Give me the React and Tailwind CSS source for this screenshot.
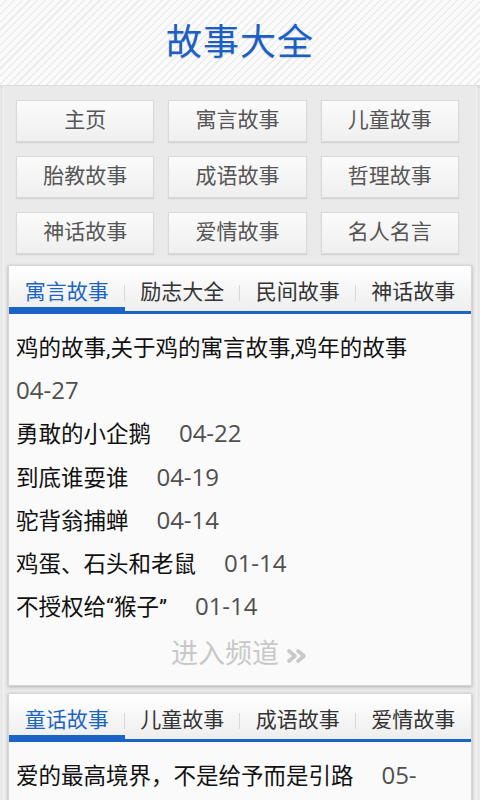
const navButtons = [
  '主页', '寓言故事', '儿童故事',
  '胎教故事', '成语故事', '哲理故事',
  '神话故事', '爱情故事', '名人名言',
];

const sections = [
  {
    tabs: ['寓言故事', '励志大全', '民间故事', '神话故事'],
    items: [
      { title: '鸡的故事,关于鸡的寓言故事,鸡年的故事', date: '04-27' },
      { title: '勇敢的小企鹅', date: '04-22' },
      { title: '到底谁耍谁', date: '04-19' },
      { title: '驼背翁捕蝉', date: '04-14' },
      { title: '鸡蛋、石头和老鼠', date: '01-14' },
      { title: '不授权给“猴子”', date: '01-14' },
    ],
  },
  {
    tabs: ['童话故事', '儿童故事', '成语故事', '爱情故事'],
    items: [{ title: '爱的最高境界，不是给予而是引路', date: '05-', tail: '12' }],
  },
];

const font = { fontFamily: "Roboto, 'Noto Sans CJK SC', sans-serif" };
const dateFont = { fontFamily: "'Open Sans', Roboto, sans-serif" };

const DoubleChevron = () => (
  <svg width="22" height="16" viewBox="0 0 22 16" className="ml-2 mt-1">
    <polyline points="2,3 8,8 2,13" fill="none" stroke="#c9c9c9" strokeWidth="3.6" strokeLinejoin="round" strokeLinecap="round" />
    <polyline points="11,3 17,8 11,13" fill="none" stroke="#c9c9c9" strokeWidth="3.6" strokeLinejoin="round" strokeLinecap="round" />
  </svg>
);

const Section = ({ tabs, items, more }) => (
  <div className="mx-2 bg-[#fafafa] border border-[#d6d6d6] shadow-[0_1px_3px_rgba(0,0,0,0.25)]">
    <div className="flex border-b-[3px] border-[#1a64c6] bg-gradient-to-b from-[#ffffff] to-[#eeeeee]">
      {tabs.map((tab, i) => (
        <div key={tab} className="flex-1 flex flex-col">
          <div className="h-[41px] pt-[12px] flex items-center relative">
            <span className={`w-full text-center text-[21px] ${i === 0 ? 'text-[#1a64c6]' : 'text-[#333333]'}`}>{tab}</span>
            {i < tabs.length - 1 && <span className="absolute right-0 top-[19px] h-[16px] w-px bg-[#d8d8d8]" />}
          </div>
          <div className={`h-[4px] ${i === 0 ? 'bg-[#1a64c6]' : ''}`} />
        </div>
      ))}
    </div>
    <div className="pl-[7px] pr-[30px] pt-[13px]">
      {items.map((item) => (
        <p key={item.title} className="whitespace-pre-wrap leading-[43.2px] text-[22.5px] text-[#111111]">
          <span>{item.title + '     '}</span>
          <span style={dateFont} className="text-[24px] leading-none text-[#4f4f4f]">{item.date}</span>
          {item.tail && (
            <>
              <wbr />
              <span style={dateFont} className="text-[24px] leading-none text-[#4f4f4f]">{item.tail}</span>
            </>
          )}
        </p>
      ))}
    </div>
    {more && (
      <div className="h-[50px] mb-[6px] flex items-center justify-center text-[27px] text-[#c8c8c8]">
        进入频道
        <DoubleChevron />
      </div>
    )}
  </div>
);

export default function App() {
  return (
    <div style={font} className="w-[480px] h-[800px] overflow-hidden bg-[#e8e8e8]">
      <header className="h-[86px] flex items-center justify-center bg-[repeating-linear-gradient(135deg,#fbfbfb_0px,#fbfbfb_4px,#ececec_4px,#ececec_5.5px)] border-b border-[#dcdcdc] shadow-[0_1px_3px_rgba(0,0,0,0.12)]">
        <h1 className="text-[36px] text-[#1a5fc6] tracking-[1px] [text-shadow:0_1px_1px_rgba(0,0,0,0.15)]">故事大全</h1>
      </header>

      <div className="mx-[3px] border-x border-[#f3f3f3] bg-[#eaeaea] pb-2">
        <div className="grid grid-cols-3 gap-[14px] pl-[12px] pr-[17px] pt-[14px] pb-[11px]">
          {navButtons.map((label) => (
            <div
              key={label}
              className="h-[42px] flex items-center justify-center text-[21px] text-[#555555] bg-gradient-to-b from-[#fbfbfb] to-[#efefef] border border-[#d9d9d9] shadow-[0_1px_1px_rgba(0,0,0,0.1)]"
            >
              {label}
            </div>
          ))}
        </div>

        <div className="-mx-[4px] flex flex-col gap-[7px]">
          <Section tabs={sections[0].tabs} items={sections[0].items} more />
          <Section tabs={sections[1].tabs} items={sections[1].items} />
        </div>
      </div>
    </div>
  );
}
